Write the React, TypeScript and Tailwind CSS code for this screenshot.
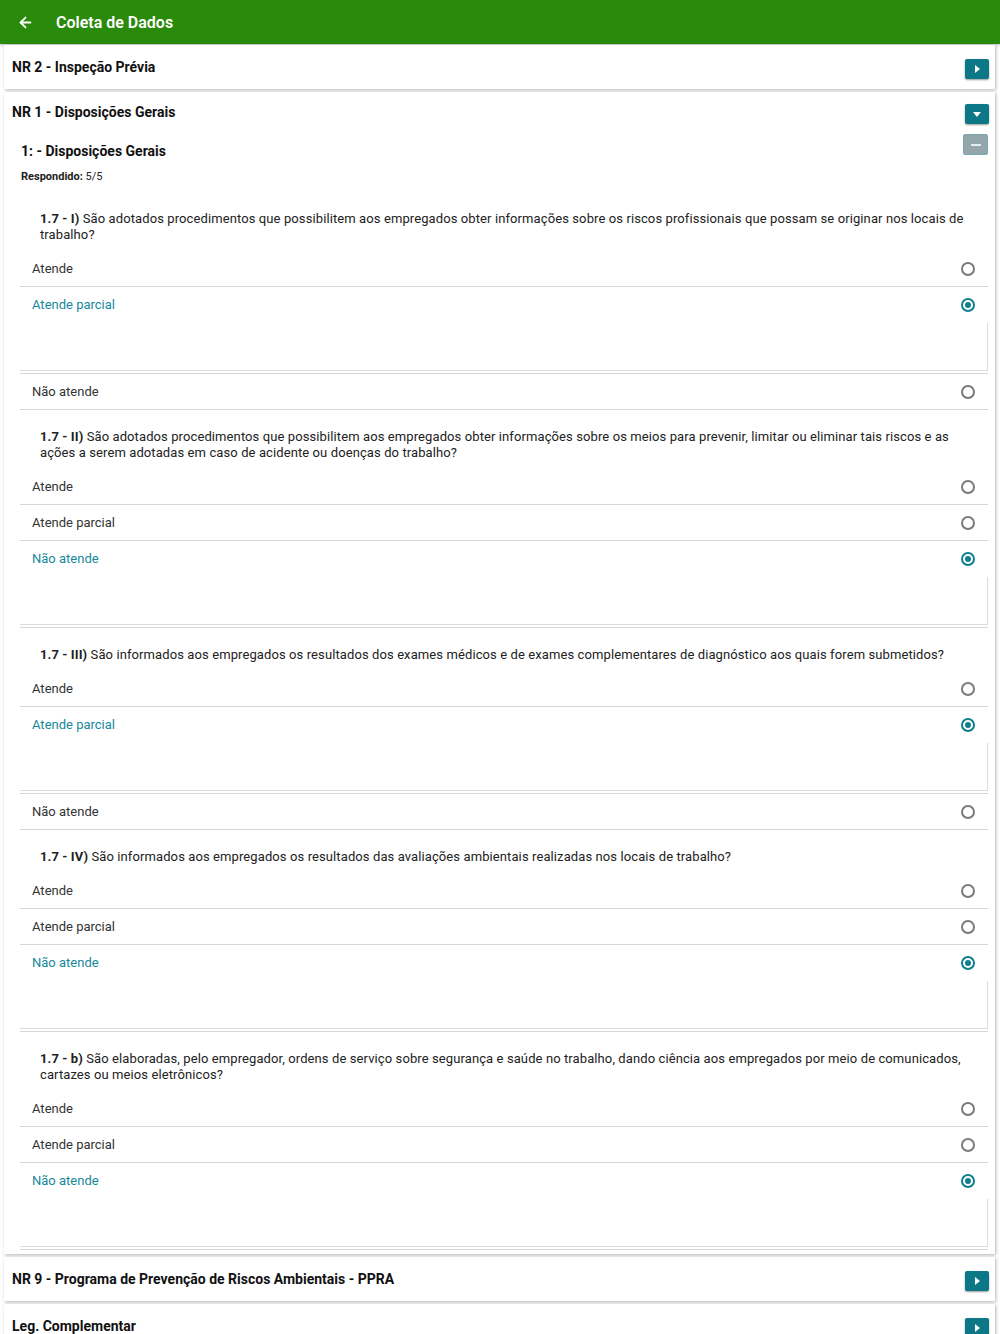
import { ArrowLeft } from 'lucide-react';

type Answer = 'Atende' | 'Atende parcial' | 'Não atende';
const OPTIONS: Answer[] = ['Atende', 'Atende parcial', 'Não atende'];

const QUESTIONS: { code: string; text: string; answer: Answer }[] = [
  {
    code: '1.7 - I)',
    text: 'São adotados procedimentos que possibilitem aos empregados obter informações sobre os riscos profissionais que possam se originar nos locais de trabalho?',
    answer: 'Atende parcial',
  },
  {
    code: '1.7 - II)',
    text: 'São adotados procedimentos que possibilitem aos empregados obter informações sobre os meios para prevenir, limitar ou eliminar tais riscos e as ações a serem adotadas em caso de acidente ou doenças do trabalho?',
    answer: 'Não atende',
  },
  {
    code: '1.7 - III)',
    text: 'São informados aos empregados os resultados dos exames médicos e de exames complementares de diagnóstico aos quais forem submetidos?',
    answer: 'Atende parcial',
  },
  {
    code: '1.7 - IV)',
    text: 'São informados aos empregados os resultados das avaliações ambientais realizadas nos locais de trabalho?',
    answer: 'Não atende',
  },
  {
    code: '1.7 - b)',
    text: 'São elaboradas, pelo empregador, ordens de serviço sobre segurança e saúde no trabalho, dando ciência aos empregados por meio de comunicados, cartazes ou meios eletrônicos?',
    answer: 'Não atende',
  },
];

function TealButton({ dir }: { dir: 'right' | 'down' }) {
  return (
    <div className="w-[24px] h-[20px] rounded-[2px] bg-[#0b7787] shadow-[0_1px_2px_rgba(0,0,0,0.4)] flex items-center justify-center">
      {dir === 'right' ? (
        <div className="w-0 h-0 border-y-[4px] border-y-transparent border-l-[5px] border-l-white ml-[1px]" />
      ) : (
        <div className="w-0 h-0 border-x-[4px] border-x-transparent border-t-[5px] border-t-white mt-[1px]" />
      )}
    </div>
  );
}

function Radio({ on }: { on: boolean }) {
  return on ? (
    <div className="w-[14px] h-[14px] rounded-full border-2 border-[#0f7f8f] flex items-center justify-center">
      <div className="w-[6px] h-[6px] rounded-full bg-[#0f7f8f]" />
    </div>
  ) : (
    <div className="w-[14px] h-[14px] rounded-full border-2 border-[#7a7a7a]" />
  );
}

function CollapsedCard({ title }: { title: string }) {
  return (
    <div className="bg-white shadow-[1px_1px_3px_rgba(0,0,0,0.3)] h-[44px] pl-[8px] pr-[6px] flex items-center justify-between">
      <span className="text-[14px] font-bold text-[#111]">{title}</span>
      <div className="mt-[4px]">
        <TealButton dir="right" />
      </div>
    </div>
  );
}

function Question({ code, text, answer }: { code: string; text: string; answer: Answer }) {
  return (
    <div>
      <div className="pt-[19px] pb-[8px] pl-[20px] pr-[20px] text-[13px] leading-[16px] tracking-[0.1px] text-[#222]">
        <span className="font-bold">{code}</span> {text}
      </div>
      {OPTIONS.map((opt) => {
        const on = opt === answer;
        if (on) {
          return (
            <div key={opt} className="border-b border-[#d6d6d6]">
              <div className="h-[36px] pl-[12px] pr-[13px] flex items-center justify-between">
                <span className="text-[13px] text-[#17899b]">{opt}</span>
                <Radio on />
              </div>
              <div className="h-[48px] border-r border-b border-[#dcdcdc] mb-[2px]" />
            </div>
          );
        }
        return (
          <div key={opt} className="h-[36px] border-b border-[#d6d6d6] pl-[12px] pr-[13px] flex items-center justify-between">
            <span className="text-[13px] text-[#333]">{opt}</span>
            <Radio on={false} />
          </div>
        );
      })}
    </div>
  );
}

export default function App() {
  return (
    <div className="min-h-screen bg-white font-['Roboto','Liberation_Sans',sans-serif]">
      <header className="h-[44px] bg-[#2a8a0c] flex items-center shadow-[0_1px_3px_rgba(0,0,0,0.3)]">
        <ArrowLeft className="ml-[17px] mt-[1px] w-[17px] h-[17px] text-white" strokeWidth={2.5} />
        <span className="ml-[22px] mt-[1px] text-white text-[16px] font-semibold">Coleta de Dados</span>
      </header>

      <div className="pl-[4px] pr-[5px] pt-[1px] flex flex-col gap-[3px]">
        <CollapsedCard title="NR 2 - Inspeção Prévia" />

        <div className="bg-white shadow-[1px_1px_3px_rgba(0,0,0,0.3)] pb-[4px]">
          <div className="h-[40px] pl-[8px] pr-[6px] flex items-center justify-between">
            <span className="text-[14px] font-bold text-[#111]">NR 1 - Disposições Gerais</span>
            <div className="mt-[4px]">
              <TealButton dir="down" />
            </div>
          </div>

          <div className="pl-[16px] pr-[7px]">
            <div className="flex justify-between items-start">
              <div className="pl-[1px] pt-[9px]">
                <div className="text-[14px] leading-[20px] font-bold text-[#111]">1: - Disposições Gerais</div>
                <div className="mt-[9px] text-[11px] leading-[14px] text-[#222]">
                  <span className="font-bold">Respondido:</span> 5/5
                </div>
              </div>
              <div className="mt-[2px] w-[25px] h-[21px] rounded-[2px] bg-[#93a6ab] border border-[#78a8b2] flex items-center justify-center">
                <div className="w-[10px] h-[2px] bg-[#e6eced]" />
              </div>
            </div>

            <div className="mt-[8px]">
              {QUESTIONS.map((q) => (
                <Question key={q.code} code={q.code} text={q.text} answer={q.answer} />
              ))}
            </div>
          </div>
        </div>

        <CollapsedCard title="NR 9 - Programa de Prevenção de Riscos Ambientais - PPRA" />
        <CollapsedCard title="Leg. Complementar" />
      </div>
    </div>
  );
}
